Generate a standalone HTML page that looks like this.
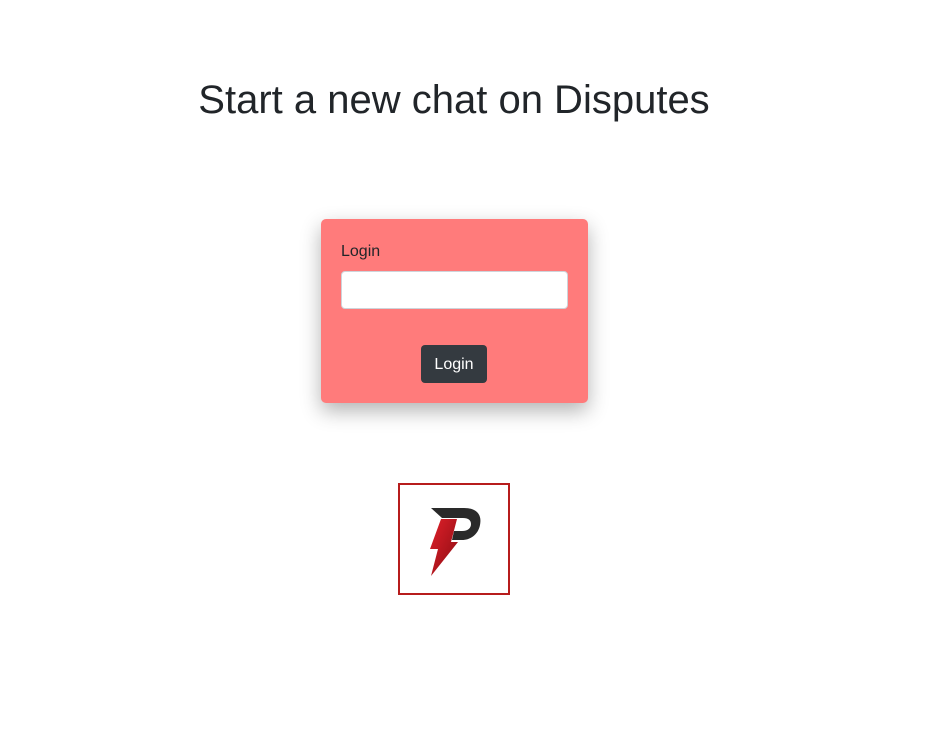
<!DOCTYPE html>
<html><head><meta charset="utf-8"><style>
body{margin:0;background:#fff;font-family:"Liberation Sans",sans-serif;color:#212529;width:929px;height:756px;position:relative;overflow:hidden}
h1{position:absolute;left:0;width:908px;text-align:center;top:76px;margin:0;font-size:40px;font-weight:400;line-height:48px}
.card{position:absolute;left:321px;top:219px;width:267px;height:184px;background:#ff7b7b;border-radius:5px;box-shadow:0 8px 20px rgba(0,0,0,.3)}
.lbl{position:absolute;left:20px;top:23px;font-size:16px;line-height:20px}
.inp{position:absolute;left:20px;top:52px;width:225px;height:36px;background:#fff;border:1px solid #ced4da;border-radius:4px}
.btn{position:absolute;left:100px;top:126px;width:66px;height:38px;background:#343a40;border-radius:4px;color:#fff;font-size:16px;line-height:40px;text-align:center}
.logo{position:absolute;left:398px;top:483px;width:108px;height:108px;border:2px solid #b71c1c;background:#fff}
</style></head><body>
<h1>Start a new chat on Disputes</h1>
<div class="card"><div class="lbl">Login</div><div class="inp"></div><div class="btn">Login</div></div>
<div class="logo"><svg width="108" height="108" viewBox="0 0 108 108">
<defs><linearGradient id="g" x1="0" y1="0" x2="1" y2="1"><stop offset="0" stop-color="#e0202a"/><stop offset="1" stop-color="#8a0c12"/></linearGradient></defs>
<path d="M31 23 L64 23 C78 23 82 31 80 40 C78 50 70 55 62 55 L52 55 L54 46 L62 46 C68 46 71 43 71 39 C71 35 68 33 63 33 L42 33 Z" fill="#2a2a2a"/>
<path d="M41 34 L57 34 L51 57 L58 57 L31 91 L38 64 L30 64 Z" fill="url(#g)"/>
</svg></div>
</body></html>
